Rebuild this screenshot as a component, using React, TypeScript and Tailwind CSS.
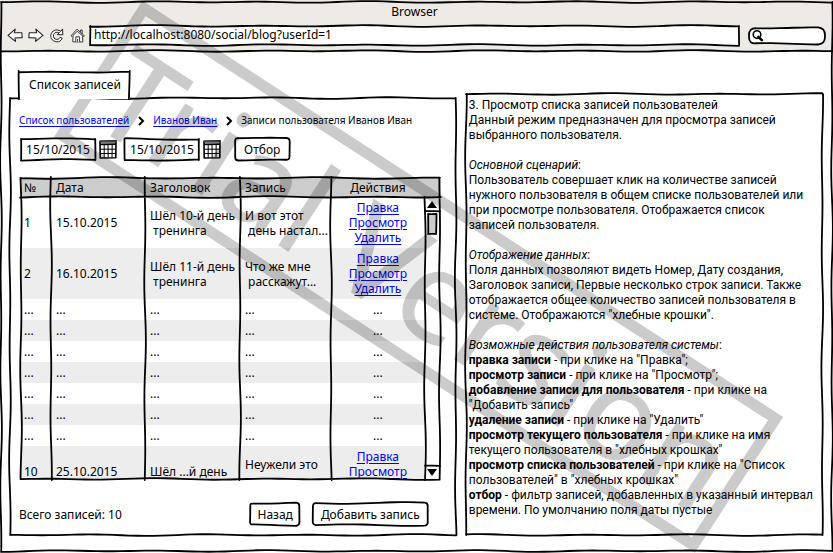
import { useLayoutEffect, useRef, useState } from "react";
import type { ReactNode } from "react";
import clsx from "clsx";

/* ---------- hand-drawn outlines ---------- */

function wavyLine(x1: number, y1: number, x2: number, y2: number, seed: number) {
  const length = Math.hypot(x2 - x1, y2 - y1);
  const steps = Math.max(2, Math.round(length / 8));
  const nx = -(y2 - y1) / (length || 1);
  const ny = (x2 - x1) / (length || 1);
  const amp = Math.min(0.8, length / 40);
  const points: string[] = [];
  for (let i = 0; i <= steps; i++) {
    const t = i / steps;
    const d = t * length;
    const off = amp * (0.7 * Math.sin(d / 17 + seed) + 0.4 * Math.sin(d / 29 + seed * 2.3));
    points.push(`${(x1 + (x2 - x1) * t + nx * off).toFixed(2)} ${(y1 + (y2 - y1) * t + ny * off).toFixed(2)}`);
  }
  return points;
}

type SketchProps = {
  sides?: string;
  radius?: number;
  seed?: number;
  columns?: number[];
  rows?: number[];
  fill?: string;
  stroke?: number;
};

function Sketch({ sides = "trbl", radius = 0, seed = 1, columns = [], rows = [], fill = "none", stroke = 1.8 }: SketchProps) {
  const ref = useRef<SVGSVGElement>(null);
  const [size, setSize] = useState({ w: 0, h: 0 });

  useLayoutEffect(() => {
    const el = ref.current;
    if (!el) return;
    const measure = () => {
      const box = el.getBoundingClientRect();
      setSize({ w: box.width, h: box.height });
    };
    measure();
    const observer = new ResizeObserver(measure);
    observer.observe(el);
    return () => observer.disconnect();
  }, []);

  const { w, h } = size;
  const r = radius;
  const a = 1;
  const R = w - 1;
  const B = h - 1;
  let outline = "";
  if (w > 0) {
    if (sides === "trbl") {
      const top = wavyLine(a + r, a, R - r, a, seed);
      const right = wavyLine(R, a + r, R, B - r, seed + 2);
      const bottom = wavyLine(R - r, B, a + r, B, seed + 4);
      const left = wavyLine(a, B - r, a, a + r, seed + 5);
      outline =
        `M${top.join("L")}Q${R} ${a} ${right.join("L")}` +
        `Q${R} ${B} ${bottom.join("L")}Q${a} ${B} ${left.join("L")}Q${a} ${a} ${top[0]}Z`;
    } else {
      if (sides.includes("t")) outline += `M${wavyLine(a, a, R, a, seed).join("L")}`;
      if (sides.includes("r")) outline += `M${wavyLine(R, 0, R, h, seed + 2).join("L")}`;
      if (sides.includes("b")) outline += `M${wavyLine(a, B, R, B, seed + 4).join("L")}`;
      if (sides.includes("l")) outline += `M${wavyLine(a, 0, a, h, seed + 5).join("L")}`;
    }
    columns.forEach((x, i) => (outline += `M${wavyLine(x, 0, x, h, seed + i * 1.7).join("L")}`));
    rows.forEach((y, i) => (outline += `M${wavyLine(0, y, w, y, seed + i * 1.3 + 3).join("L")}`));
  }

  return (
    <svg ref={ref} aria-hidden="true" className="pointer-events-none absolute inset-0 h-full w-full overflow-visible">
      <path d={outline} fill={fill} stroke="#000" strokeWidth={stroke} strokeLinejoin="round" strokeLinecap="round" />
    </svg>
  );
}

/* ---------- icons ---------- */

function ArrowIcon({ flip }: { flip?: boolean }) {
  return (
    <svg viewBox="0 0 16 16" className={clsx("size-4", flip && "-scale-x-100")} fill="#fff" stroke="#222" strokeWidth="1.1" strokeLinejoin="round">
      <path d="M1 7.4 8.2 1.2 7.4 4.6 14.8 4.8 15.2 9.6 8 10 8.4 13.4Z" />
    </svg>
  );
}

function ReloadIcon() {
  return (
    <svg viewBox="0 0 16 16" className="size-4" fill="#fff" stroke="#222" strokeWidth="1" strokeLinejoin="round">
      <path d="M13.6 1 13.8 6.8 8.2 6.6 10 5C8 3.6 5.4 4.2 4.6 6.6 3.8 9.2 5.4 11.4 7.8 11.4 9.4 11.4 10.4 10.6 11 9.4L13.2 10.2C12.2 12.8 10.2 14 7.8 13.8 4 13.6 1.4 10.8 1.8 7.2 2.4 2.6 7.6.4 11.6 3.2Z" />
      <path d="M11.4 3.6 10.2 4.8" fill="none" />
    </svg>
  );
}

function HomeIcon() {
  return (
    <svg viewBox="0 0 16 16" className="size-4" fill="#fff" stroke="#222" strokeWidth="0.9" strokeLinejoin="round">
      <path d="M3 7.6 2.8 13.8 12.8 14 12.6 7.4" />
      <path d="M10.6 4.4V2H12.2V6" />
      <path d="M1 7.8 7 1.2 14.4 7.8 13.2 8.4 7.2 3.2 2.2 8.4Z" />
      <path d="M5.8 13.8V8.8H9.6V13.8M7.6 11V13.8" />
    </svg>
  );
}

function SearchIcon() {
  return (
    <svg viewBox="0 0 12 12" className="size-3 shrink-0" fill="none" stroke="#000" strokeLinecap="round">
      <circle cx="5" cy="4.6" r="3.8" strokeWidth="1.6" />
      <path d="M6.4 6.8 9.8 10.2" strokeWidth="2.6" />
    </svg>
  );
}

function CalendarIcon() {
  return (
    <svg viewBox="0 0 18 20" className="h-5 w-[18px]" fill="#fff" stroke="#000">
      <path d="M1 2.2 17 1.8 16.8 18.8 1.2 19Z" strokeWidth="1.6" strokeLinejoin="round" />
      <path d="M1.2 2.6H16.8" strokeWidth="2.2" stroke="#444" />
      <path d="M1.2 5.4 16.8 5.2" strokeWidth="1.8" />
      <path d="M5.2 6V18.6M9 6 9.2 18.6M13.2 6 13 18.6M1.4 10.2H16.8M1.4 14.6 16.8 14.4" strokeWidth="1" fill="none" />
    </svg>
  );
}

function Chevron() {
  return (
    <svg viewBox="0 0 8 10" aria-hidden="true" className="h-[10px] w-2 shrink-0" fill="none" stroke="#000" strokeWidth="2">
      <path d="M2 1 6 5 2 9" />
    </svg>
  );
}

/* ---------- controls ---------- */

function SketchButton({ children, seed, className }: { children: ReactNode; seed: number; className?: string }) {
  return (
    <button type="button" className={clsx("relative h-6", className)}>
      <Sketch radius={3} seed={seed} fill="#fff" />
      <span className="relative">{children}</span>
    </button>
  );
}

function DateField({ label, seed }: { label: string; seed: number }) {
  return (
    <div className="flex items-center gap-[3px]">
      <div className="relative h-[23px] w-[76px]">
        <Sketch seed={seed} fill="#fff" />
        <input
          aria-label={label}
          defaultValue="15/10/2015"
          className="relative h-full w-full bg-transparent text-center outline-none"
        />
      </div>
      <button type="button" aria-label={`${label}: календарь`}>
        <CalendarIcon />
      </button>
    </div>
  );
}

function Link({ children }: { children: ReactNode }) {
  return (
    <a href="#" className="text-[#0000ff] underline underline-offset-2">
      {children}
    </a>
  );
}

/* ---------- data ---------- */

type Row = { id: string; date: string; title: string; text: string; actions: boolean };

const filler: Row = { id: "...", date: "...", title: "...", text: "...", actions: false };

const rows: Row[] = [
  { id: "1", date: "15.10.2015", title: "Шёл 10-й день\n тренинга", text: "И вот этот\n день настал...", actions: true },
  { id: "2", date: "16.10.2015", title: "Шёл 11-й день\n тренинга", text: "Что же мне\n расскажут...", actions: true },
  ...Array.from({ length: 7 }, () => filler),
  { id: "10", date: "25.10.2015", title: "Шёл ...й день", text: "Неужели это\n\u00a0", actions: true },
];

function PostsTable() {
  return (
    <div className="relative mt-4 ml-px h-[303px]">
      <div className="h-full overflow-hidden">
        <table className="w-full table-fixed border-collapse">
          <colgroup>
            <col className="w-[31px]" />
            <col className="w-[94px]" />
            <col className="w-[95px]" />
            <col className="w-[91px]" />
            <col />
            <col className="w-[16px]" />
          </colgroup>
          <thead>
            <tr className="h-[20px] bg-[#cccccc] text-left">
              <th className="p-0 pl-1 font-normal">№</th>
              <th className="p-0 pl-[5px] font-normal">Дата</th>
              <th className="p-0 pl-[5px] font-normal">Заголовок</th>
              <th className="p-0 pl-[5px] font-normal">Запись</th>
              <th className="p-0 text-center font-normal">Действия</th>
              <th className="p-0" />
            </tr>
          </thead>
          <tbody>
            {rows.map((row, i) => (
              <tr key={i} className={clsx("whitespace-pre even:bg-[#ededed]", row.actions ? "h-[51px]" : "h-[21px]")}>
                <td className="p-0 pl-1">{row.id}</td>
                <td className="p-0 pl-[5px]">{row.date}</td>
                <td className="p-0 pl-[5px]">{row.title}</td>
                <td className="p-0 pl-[5px]">{row.text}</td>
                <td className="p-0 text-center">
                  {row.actions ? (
                    <>
                      <Link>Правка</Link>
                      <br />
                      <Link>Просмотр</Link>
                      <br />
                      <Link>Удалить</Link>
                    </>
                  ) : (
                    "..."
                  )}
                </td>
                <td className="p-0" />
              </tr>
            ))}
          </tbody>
        </table>
      </div>
      <div className="absolute top-5 right-0 bottom-0 flex w-[17px] flex-col items-center bg-white">
        <Sketch sides="l" seed={4} />
        <button type="button" aria-label="Вверх" className="relative flex h-[15px] w-full items-center justify-center">
          <Sketch sides="b" seed={2} />
          <svg viewBox="0 0 10 7" className="h-[7px] w-[10px]">
            <path d="M5 0 10 7H0Z" />
          </svg>
        </button>
        <div className="relative mt-px h-[22px] w-[10px]">
          <Sketch seed={3} fill="#cccccc" />
        </div>
        <button type="button" aria-label="Вниз" className="relative mt-auto flex h-[15px] w-full items-center justify-center">
          <Sketch sides="t" seed={5} />
          <svg viewBox="0 0 10 7" className="h-[7px] w-[10px]">
            <path d="M0 0H10L5 7Z" />
          </svg>
        </button>
      </div>
      <Sketch seed={6} columns={[31, 125, 220, 311]} rows={[20]} />
    </div>
  );
}

function Description() {
  return (
    <section className="relative mt-[22px] pt-[5px] pl-1 font-[Roboto,sans-serif] whitespace-nowrap">
      <Sketch seed={2.5} />
      <p>
        3. Просмотр списка записей пользователей
        <br />
        Данный режим предназначен для просмотра записей
        <br />
        выбранного пользователя.
      </p>
      <p className="mt-[15px]">
        <i>Основной сценарий</i>:<br />
        Пользователь совершает клик на количестве записей
        <br />
        нужного пользователя в общем списке пользователей или
        <br />
        при просмотре пользователя. Отображается список
        <br />
        записей пользователя.
      </p>
      <p className="mt-[15px]">
        <i>Отображение данных</i>:<br />
        Поля данных позволяют видеть Номер, Дату создания,
        <br />
        Заголовок записи, Первые несколько строк записи. Также
        <br />
        отображается общее количество записей пользователя в
        <br />
        системе. Отображаются "хлебные крошки".
      </p>
      <p className="mt-[15px]">
        <i>Возможные действия пользователя системы</i>:<br />
        <b>правка записи</b> - при клике на "Правка";
        <br />
        <b>просмотр записи</b> - при клике на "Просмотр";
        <br />
        <b>добавление записи для пользователя</b> - при клике на
        <br />
        "Добавить запись"
        <br />
        <b>удаление записи</b> - при клике на "Удалить"
        <br />
        <b>просмотр текущего пользователя</b> - при клике на имя
        <br />
        текущего пользователя в "хлебных крошках"
        <br />
        <b>просмотр списка пользователей</b> - при клике на "Список
        <br />
        пользователей" в "хлебных крошках"
        <br />
        <b>отбор</b> - фильтр записей, добавленных в указанный интервал
        <br />
        времени. По умолчанию поля даты пустые
      </p>
    </section>
  );
}

function Watermark() {
  return (
    <svg
      viewBox="0 0 833 553"
      className="pointer-events-none absolute inset-0 h-full w-full"
      aria-hidden="true"
    >
      <g transform="translate(418 277) rotate(33)" opacity="0.2">
        <rect x="-376" y="-76" width="753" height="151" fill="none" stroke="#000" strokeWidth="11" />
        <text y="49" textAnchor="middle" fontSize="126" stroke="#000" strokeWidth="1">
          Trial Version
        </text>
      </g>
    </svg>
  );
}

export default function App() {
  return (
    <div className="relative flex min-h-screen flex-col overflow-hidden bg-white font-['Noto_Sans',sans-serif] text-[12px] leading-[15px] text-black">
      <header className="relative bg-[#eeebe6] px-[7px] pt-[4px] pb-[6px]">
        <h1 className="pr-1 text-center">Browser</h1>
        <div className="mt-[6px] flex h-[21px] items-center">
          <nav className="flex w-[82px] shrink-0 gap-[5px]">
            <button type="button" aria-label="Назад в браузере"><ArrowIcon /></button>
            <button type="button" aria-label="Вперёд"><ArrowIcon flip /></button>
            <button type="button" aria-label="Обновить"><ReloadIcon /></button>
            <button type="button" aria-label="Домой"><HomeIcon /></button>
          </nav>
          <div className="relative h-full flex-1">
            <Sketch seed={1} fill="#fff" />
            <input
              aria-label="Адрес"
              defaultValue="http://localhost:8080/social/blog?userId=1"
              className="relative h-full w-full bg-transparent px-[5px] pb-[2px] outline-none"
            />
          </div>
          <div className="relative ml-2 flex h-[18px] w-[78px] items-center pl-1">
            <Sketch seed={7} radius={7} fill="#fff" />
            <span className="relative flex"><SearchIcon /></span>
            <input aria-label="Поиск" className="relative w-full min-w-0 bg-transparent px-1 outline-none" />
          </div>
        </div>
        <Sketch sides="b" seed={4} />
      </header>

      <main className="grid flex-1 grid-cols-[minmax(0,5fr)_minmax(0,4fr)] gap-2 pt-[19px] pr-[10px] pb-[17px] pl-[9px]">
        <div className="flex flex-col">
          <div className="relative z-10 -mb-[2px] ml-[9px] flex h-7 w-[112px] items-center self-start bg-white pb-[2px] pl-[11px]">
            <Sketch sides="tlr" seed={3} />
            <h2>Список записей</h2>
          </div>
          <section className="relative flex-1 pt-4 pr-4 pb-[9px] pl-[10px]">
            <Sketch seed={1.5} />
            <nav aria-label="Навигация" className="flex items-center gap-2 text-[10px]">
              <Link>Список пользователей</Link>
              <Chevron />
              <Link>Иванов Иван</Link>
              <Chevron />
              <span>Записи пользователя Иванов Иван</span>
            </nav>
            <div className="mt-[9px] flex items-center gap-[7px] pl-px">
              <DateField label="Дата от" seed={2} />
              <DateField label="Дата до" seed={5} />
              <SketchButton seed={3} className="ml-[6px] px-[10px]">Отбор</SketchButton>
            </div>
            <PostsTable />
            <div className="mt-[22px] flex items-center">
              <p className="flex-1">Всего записей: 10</p>
              <SketchButton seed={1} className="px-2">Назад</SketchButton>
              <SketchButton seed={6} className="mr-3 ml-[11px] px-[9px]">Добавить запись</SketchButton>
            </div>
          </section>
        </div>
        <Description />
      </main>

      <div className="pointer-events-none absolute inset-x-0 top-[1px] bottom-[1px]">
        <Sketch seed={2} />
      </div>
      <Watermark />
    </div>
  );
}
